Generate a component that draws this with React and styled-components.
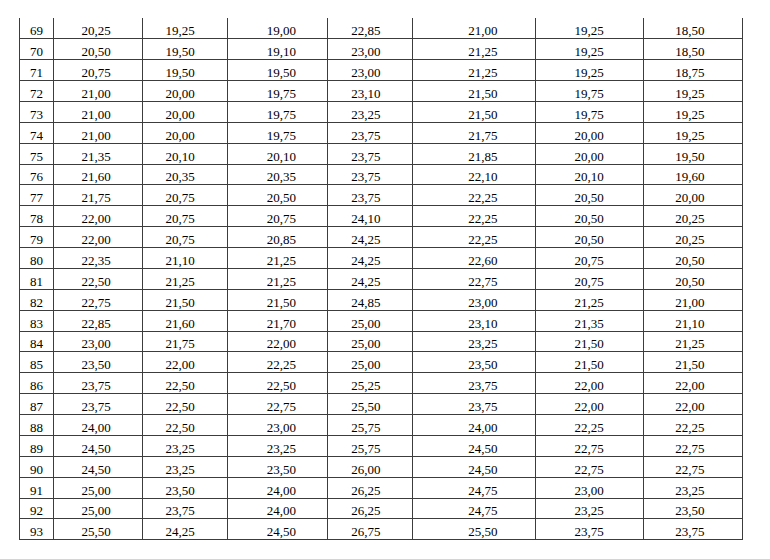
import React from "react";
import styled, { createGlobalStyle } from "styled-components";

const Global = createGlobalStyle`
  html, body { margin: 0; padding: 0; background: #fff; }
  body { font-family: "Liberation Serif", Tinos, "Times New Roman", serif; color: #000; }
`;

const COLS = [
  { w: 34, shift: 0 },
  { w: 89, shift: -1.8 },
  { w: 85, shift: -4.8 },
  { w: 99.5, shift: 4 },
  { w: 85, shift: -3.7 },
  { w: 123, shift: 9.3 },
  { w: 108, shift: 0 },
  { w: 99.5, shift: -2.8 },
];

const DATA = [
  ["69", "20,25", "19,25", "19,00", "22,85", "21,00", "19,25", "18,50"],
  ["70", "20,50", "19,50", "19,10", "23,00", "21,25", "19,25", "18,50"],
  ["71", "20,75", "19,50", "19,50", "23,00", "21,25", "19,25", "18,75"],
  ["72", "21,00", "20,00", "19,75", "23,10", "21,50", "19,75", "19,25"],
  ["73", "21,00", "20,00", "19,75", "23,25", "21,50", "19,75", "19,25"],
  ["74", "21,00", "20,00", "19,75", "23,75", "21,75", "20,00", "19,25"],
  ["75", "21,35", "20,10", "20,10", "23,75", "21,85", "20,00", "19,50"],
  ["76", "21,60", "20,35", "20,35", "23,75", "22,10", "20,10", "19,60"],
  ["77", "21,75", "20,75", "20,50", "23,75", "22,25", "20,50", "20,00"],
  ["78", "22,00", "20,75", "20,75", "24,10", "22,25", "20,50", "20,25"],
  ["79", "22,00", "20,75", "20,85", "24,25", "22,25", "20,50", "20,25"],
  ["80", "22,35", "21,10", "21,25", "24,25", "22,60", "20,75", "20,50"],
  ["81", "22,50", "21,25", "21,25", "24,25", "22,75", "20,75", "20,50"],
  ["82", "22,75", "21,50", "21,50", "24,85", "23,00", "21,25", "21,00"],
  ["83", "22,85", "21,60", "21,70", "25,00", "23,10", "21,35", "21,10"],
  ["84", "23,00", "21,75", "22,00", "25,00", "23,25", "21,50", "21,25"],
  ["85", "23,50", "22,00", "22,25", "25,00", "23,50", "21,50", "21,50"],
  ["86", "23,75", "22,50", "22,50", "25,25", "23,75", "22,00", "22,00"],
  ["87", "23,75", "22,50", "22,75", "25,50", "23,75", "22,00", "22,00"],
  ["88", "24,00", "22,50", "23,00", "25,75", "24,00", "22,25", "22,25"],
  ["89", "24,50", "23,25", "23,25", "25,75", "24,50", "22,75", "22,75"],
  ["90", "24,50", "23,25", "23,50", "26,00", "24,50", "22,75", "22,75"],
  ["91", "25,00", "23,50", "24,00", "26,25", "24,75", "23,00", "23,25"],
  ["92", "25,00", "23,75", "24,00", "26,25", "24,75", "23,25", "23,50"],
  ["93", "25,50", "24,25", "24,50", "26,75", "25,50", "23,75", "23,75"],
];

const Page = styled.div`
  width: 770px;
  height: 559px;
  padding: 18.4px 0 0 19px;
  box-sizing: border-box;
  background: #fff;
  font-family: "Liberation Serif", Tinos, "Times New Roman", serif;
`;

const Table = styled.div`
  display: flex;
  flex-direction: column;
  width: max-content;
  border-left: 1px solid #3c3c3c;
`;

const Row = styled.div`
  display: grid;
  grid-template-columns: ${COLS.map((c) => `${c.w}px`).join(" ")};
  height: 20.875px;
  box-sizing: border-box;
  border-bottom: 1px solid #3c3c3c;
`;

const Cell = styled.div`
  display: flex;
  align-items: flex-end;
  justify-content: center;
  box-sizing: border-box;
  border-right: 1px solid #3c3c3c;
  padding-left: ${(p) => Math.max(0, p.$shift * 2)}px;
  padding-right: ${(p) => Math.max(0, -p.$shift * 2)}px;
  font-family: "Liberation Serif", Tinos, "Times New Roman", serif;
  font-size: 13px;
  line-height: 15px;
  color: #000;
  white-space: nowrap;
`;

export default function App() {
  return (
    <Page>
      <Global />
      <Table>
        {DATA.map((row) => (
          <Row key={row[0]}>
            {row.map((v, i) => (
              <Cell key={i} $shift={COLS[i].shift}>
                {v}
              </Cell>
            ))}
          </Row>
        ))}
      </Table>
    </Page>
  );
}
